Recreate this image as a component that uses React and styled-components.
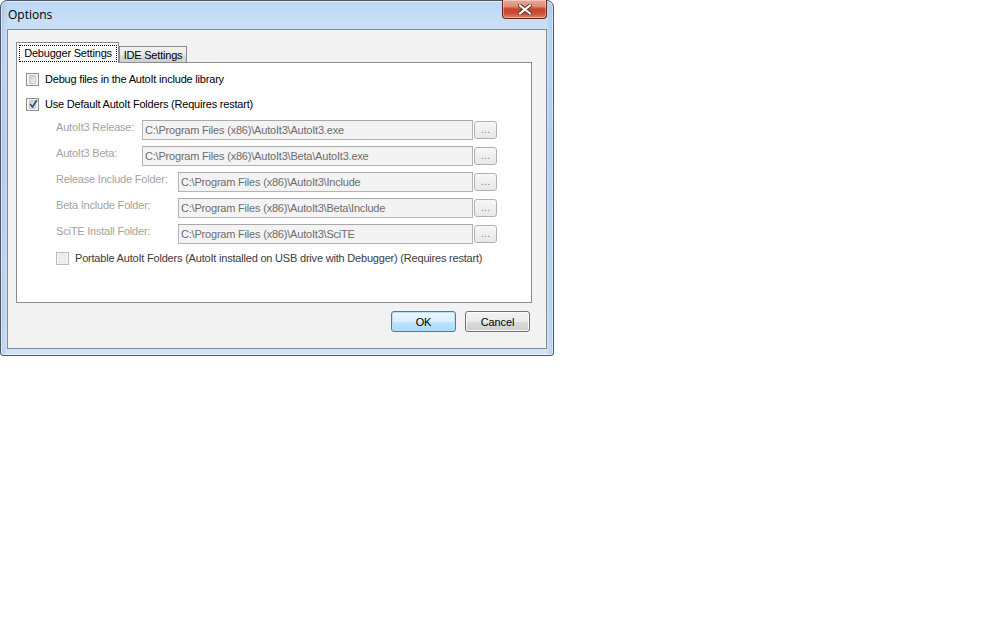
import React from "react";
import styled, { createGlobalStyle, css } from "styled-components";

const Global = createGlobalStyle`
  html, body { margin: 0; padding: 0; background: #ffffff; }
  body { font-family: "Liberation Sans", Arial, sans-serif; font-size: 11px; color: #000; }
  * { box-sizing: border-box; }
`;

const Window = styled.div`
  width: 554px;
  height: 356px;
  border: 1px solid #4b5868;
  border-radius: 7px 7px 3px 3px;
  background:
    linear-gradient(90deg, rgba(120,160,210,0.35) 0px, rgba(255,255,255,0) 7px, rgba(255,255,255,0) calc(100% - 7px), rgba(120,160,210,0.35) 100%),
    linear-gradient(180deg, #bcd7f4 0%, #cfe3f8 10%, #c4dbf3 40%, #d3e4f6 100%);
  padding: 0 6px 6px 6px;
  display: flex;
  flex-direction: column;
  box-shadow: inset 0 0 0 1px rgba(255,255,255,0.55);
`;

const TitleBar = styled.div`
  height: 28px;
  display: flex;
  justify-content: space-between;
  align-items: flex-start;
`;

const Title = styled.span`
  font-family: "Open Sans", "Noto Sans", sans-serif;
  font-size: 12px;
  line-height: 16px;
  margin-top: 6px;
  padding-left: 1px;
  color: #000;
`;

const CloseButton = styled.div`
  width: 45px;
  height: 19px;
  margin-top: -1px;
  border: 1px solid #5f2a22;
  border-top: none;
  border-radius: 0 0 4px 4px;
  background: linear-gradient(180deg, #e9a99a 0%, #dd8d79 35%, #c2452c 50%, #c94f35 75%, #e0866c 100%);
  box-shadow: inset 0 0 0 1px rgba(255,255,255,0.35);
  display: flex;
  align-items: center;
  justify-content: center;
`;

const Client = styled.div`
  flex: 1;
  border: 1px solid #7f8c9b;
  background: #f2f2f3;
  padding: 12px 14px 0 8px;
  display: flex;
  flex-direction: column;
`;

const TabStrip = styled.div`
  display: flex;
  align-items: flex-end;
  height: 20px;
`;

const Tab = styled.div`
  border: 1px solid #898c95;
  border-bottom: none;
  ${(p) =>
    p.$selected
      ? css`
          width: 103px;
          height: 21px;
          background: #ffffff;
          margin-bottom: -1px;
          position: relative;
          z-index: 1;
          padding: 2px 1px 0 2px;
        `
      : css`
          width: 68px;
          height: 16px;
          background: linear-gradient(180deg, #f2f2f2 0%, #ebebeb 50%, #dddddd 51%, #cfcfcf 100%);
          display: flex;
          align-items: center;
          justify-content: center;
          padding-top: 1px;
        `}
  font-size: 11px;
  letter-spacing: -0.2px;
  line-height: 13px;
  white-space: nowrap;
`;

const FocusLabel = styled.div`
  border: 1px dotted #000;
  height: 17px;
  display: flex;
  align-items: center;
  justify-content: center;
`;

const TabPanel = styled.div`
  width: 516px;
  height: 241px;
  border: 1px solid #898c95;
  background: #ffffff;
  padding: 10px 0 0 9px;
  display: flex;
  flex-direction: column;
`;

const CheckRow = styled.label`
  display: flex;
  align-items: center;
  gap: 6px;
  height: 13px;
  margin-left: ${(p) => p.$indent || 0}px;
  margin-top: ${(p) => p.$top || 0}px;
  font-size: 11px;
  letter-spacing: -0.2px;
  line-height: 13px;
  white-space: nowrap;
  color: ${(p) => (p.$disabled ? "#3c3c3c" : "#000")};
`;

const Box = styled.span`
  width: 13px;
  height: 13px;
  flex: none;
  border: 1px solid ${(p) => (p.$disabled ? "#bcbcbc" : "#8e8f8f")};
  background: #f4f4f4;
  padding: 2px;
  display: flex;
  align-items: center;
  justify-content: center;
  position: relative;
  &::before {
    content: "";
    width: 7px;
    height: 7px;
    background: ${(p) =>
      p.$disabled
        ? "#f0f0f0"
        : "linear-gradient(135deg, #c4c8cd 0%, #e2e3e5 60%, #f2f2f2 100%)"};
    border: 1px solid ${(p) => (p.$disabled ? "#e6e6e6" : "#c8cbce")};
  }
  svg {
    position: absolute;
    left: 1px;
    top: 0px;
  }
`;

const PathGroup = styled.div`
  margin: 9px 0 0 30px;
  width: 441px;
  display: flex;
  flex-direction: column;
  gap: 6px;
`;

const PathRow = styled.div`
  display: flex;
  align-items: center;
  height: 20px;
`;

const FieldLabel = styled.span`
  width: ${(p) => p.$width}px;
  flex: none;
  align-self: flex-start;
  padding-top: 1px;
  color: #a3a3a3;
  font-size: 11px;
  letter-spacing: -0.2px;
  line-height: 13px;
  white-space: nowrap;
`;

const TextBox = styled.div`
  flex: 1;
  height: 20px;
  border: 1px solid #b4b4b4;
  border-top-color: #a9a9a9;
  background: #f3f3f3;
  color: #6d6d6d;
  padding: 0 0 0 2px;
  display: flex;
  align-items: center;
  font-size: 11px;
  letter-spacing: -0.2px;
  white-space: nowrap;
  overflow: hidden;
`;

const BrowseButton = styled.div`
  width: 23px;
  height: 18px;
  margin-left: 1px;
  flex: none;
  border: 1px solid #adb2b5;
  border-radius: 3px;
  background: linear-gradient(180deg, #f7f7f7 0%, #efefef 50%, #e8e8e8 100%);
  color: #8f7fa8;
  font-size: 11px;
  line-height: 11px;
  display: flex;
  align-items: flex-end;
  justify-content: center;
  padding-bottom: 3px;
  letter-spacing: 0;
`;

const ButtonBar = styled.div`
  display: flex;
  justify-content: flex-end;
  gap: 9px;
  margin-top: 8px;
  padding-right: 2px;
`;

const DialogButton = styled.div`
  width: 65px;
  height: 21px;
  border: 1px solid ${(p) => (p.$default ? "#3c7fb1" : "#707070")};
  border-radius: 3px;
  background: ${(p) =>
    p.$default
      ? "linear-gradient(180deg, #eaf6fd 0%, #d9f0fc 50%, #bee6fd 51%, #a7d9f5 100%)"
      : "linear-gradient(180deg, #f2f2f2 0%, #ebebeb 50%, #dddddd 51%, #cfcfcf 100%)"};
  box-shadow: inset 0 0 0 1px ${(p) => (p.$default ? "#b3e3fb" : "rgba(255,255,255,0.8)")};
  display: flex;
  align-items: center;
  justify-content: center;
  font-size: 11px;
  letter-spacing: -0.1px;
  color: #000;
  padding-top: 1px;
`;

const CheckMark = () => (
  <svg width="11" height="11" viewBox="0 0 11 11">
    <path d="M2.5 5.5 L4.5 8 L8.5 1.8" fill="none" stroke="#3d4f8f" strokeWidth="1.8" strokeLinecap="round" strokeLinejoin="round" />
  </svg>
);

const CloseGlyph = () => (
  <svg width="14" height="11" viewBox="0 0 14 11">
    <path d="M2 1.5 L12 9.5 M12 1.5 L2 9.5" stroke="#5a2a22" strokeWidth="4" strokeLinecap="square" />
    <path d="M2 1.5 L12 9.5 M12 1.5 L2 9.5" stroke="#ffffff" strokeWidth="2.2" strokeLinecap="square" />
  </svg>
);

const paths = [
  { label: "AutoIt3 Release:", width: 86, value: "C:\\Program Files (x86)\\AutoIt3\\AutoIt3.exe" },
  { label: "AutoIt3 Beta:", width: 86, value: "C:\\Program Files (x86)\\AutoIt3\\Beta\\AutoIt3.exe" },
  { label: "Release Include Folder:", width: 122, value: "C:\\Program Files (x86)\\AutoIt3\\Include" },
  { label: "Beta Include Folder:", width: 122, value: "C:\\Program Files (x86)\\AutoIt3\\Beta\\Include" },
  { label: "SciTE Install Folder:", width: 122, value: "C:\\Program Files (x86)\\AutoIt3\\SciTE" },
];

export default function App() {
  return (
    <>
      <Global />
      <Window>
        <TitleBar>
          <Title>Options</Title>
          <CloseButton>
            <CloseGlyph />
          </CloseButton>
        </TitleBar>
        <Client>
          <TabStrip>
            <Tab $selected>
              <FocusLabel>Debugger Settings</FocusLabel>
            </Tab>
            <Tab>IDE Settings</Tab>
          </TabStrip>
          <TabPanel>
            <CheckRow>
              <Box />
              <span>Debug files in the AutoIt include library</span>
            </CheckRow>
            <CheckRow $top={12}>
              <Box>
                <CheckMark />
              </Box>
              <span>Use Default AutoIt Folders (Requires restart)</span>
            </CheckRow>
            <PathGroup>
              {paths.map((p) => (
                <PathRow key={p.label}>
                  <FieldLabel $width={p.width}>{p.label}</FieldLabel>
                  <TextBox>{p.value}</TextBox>
                  <BrowseButton>...</BrowseButton>
                </PathRow>
              ))}
            </PathGroup>
            <CheckRow $indent={30} $top={8} $disabled>
              <Box $disabled />
              <span>Portable AutoIt Folders (AutoIt installed on USB drive with Debugger) (Requires restart)</span>
            </CheckRow>
          </TabPanel>
          <ButtonBar>
            <DialogButton $default>OK</DialogButton>
            <DialogButton>Cancel</DialogButton>
          </ButtonBar>
        </Client>
      </Window>
    </>
  );
}
